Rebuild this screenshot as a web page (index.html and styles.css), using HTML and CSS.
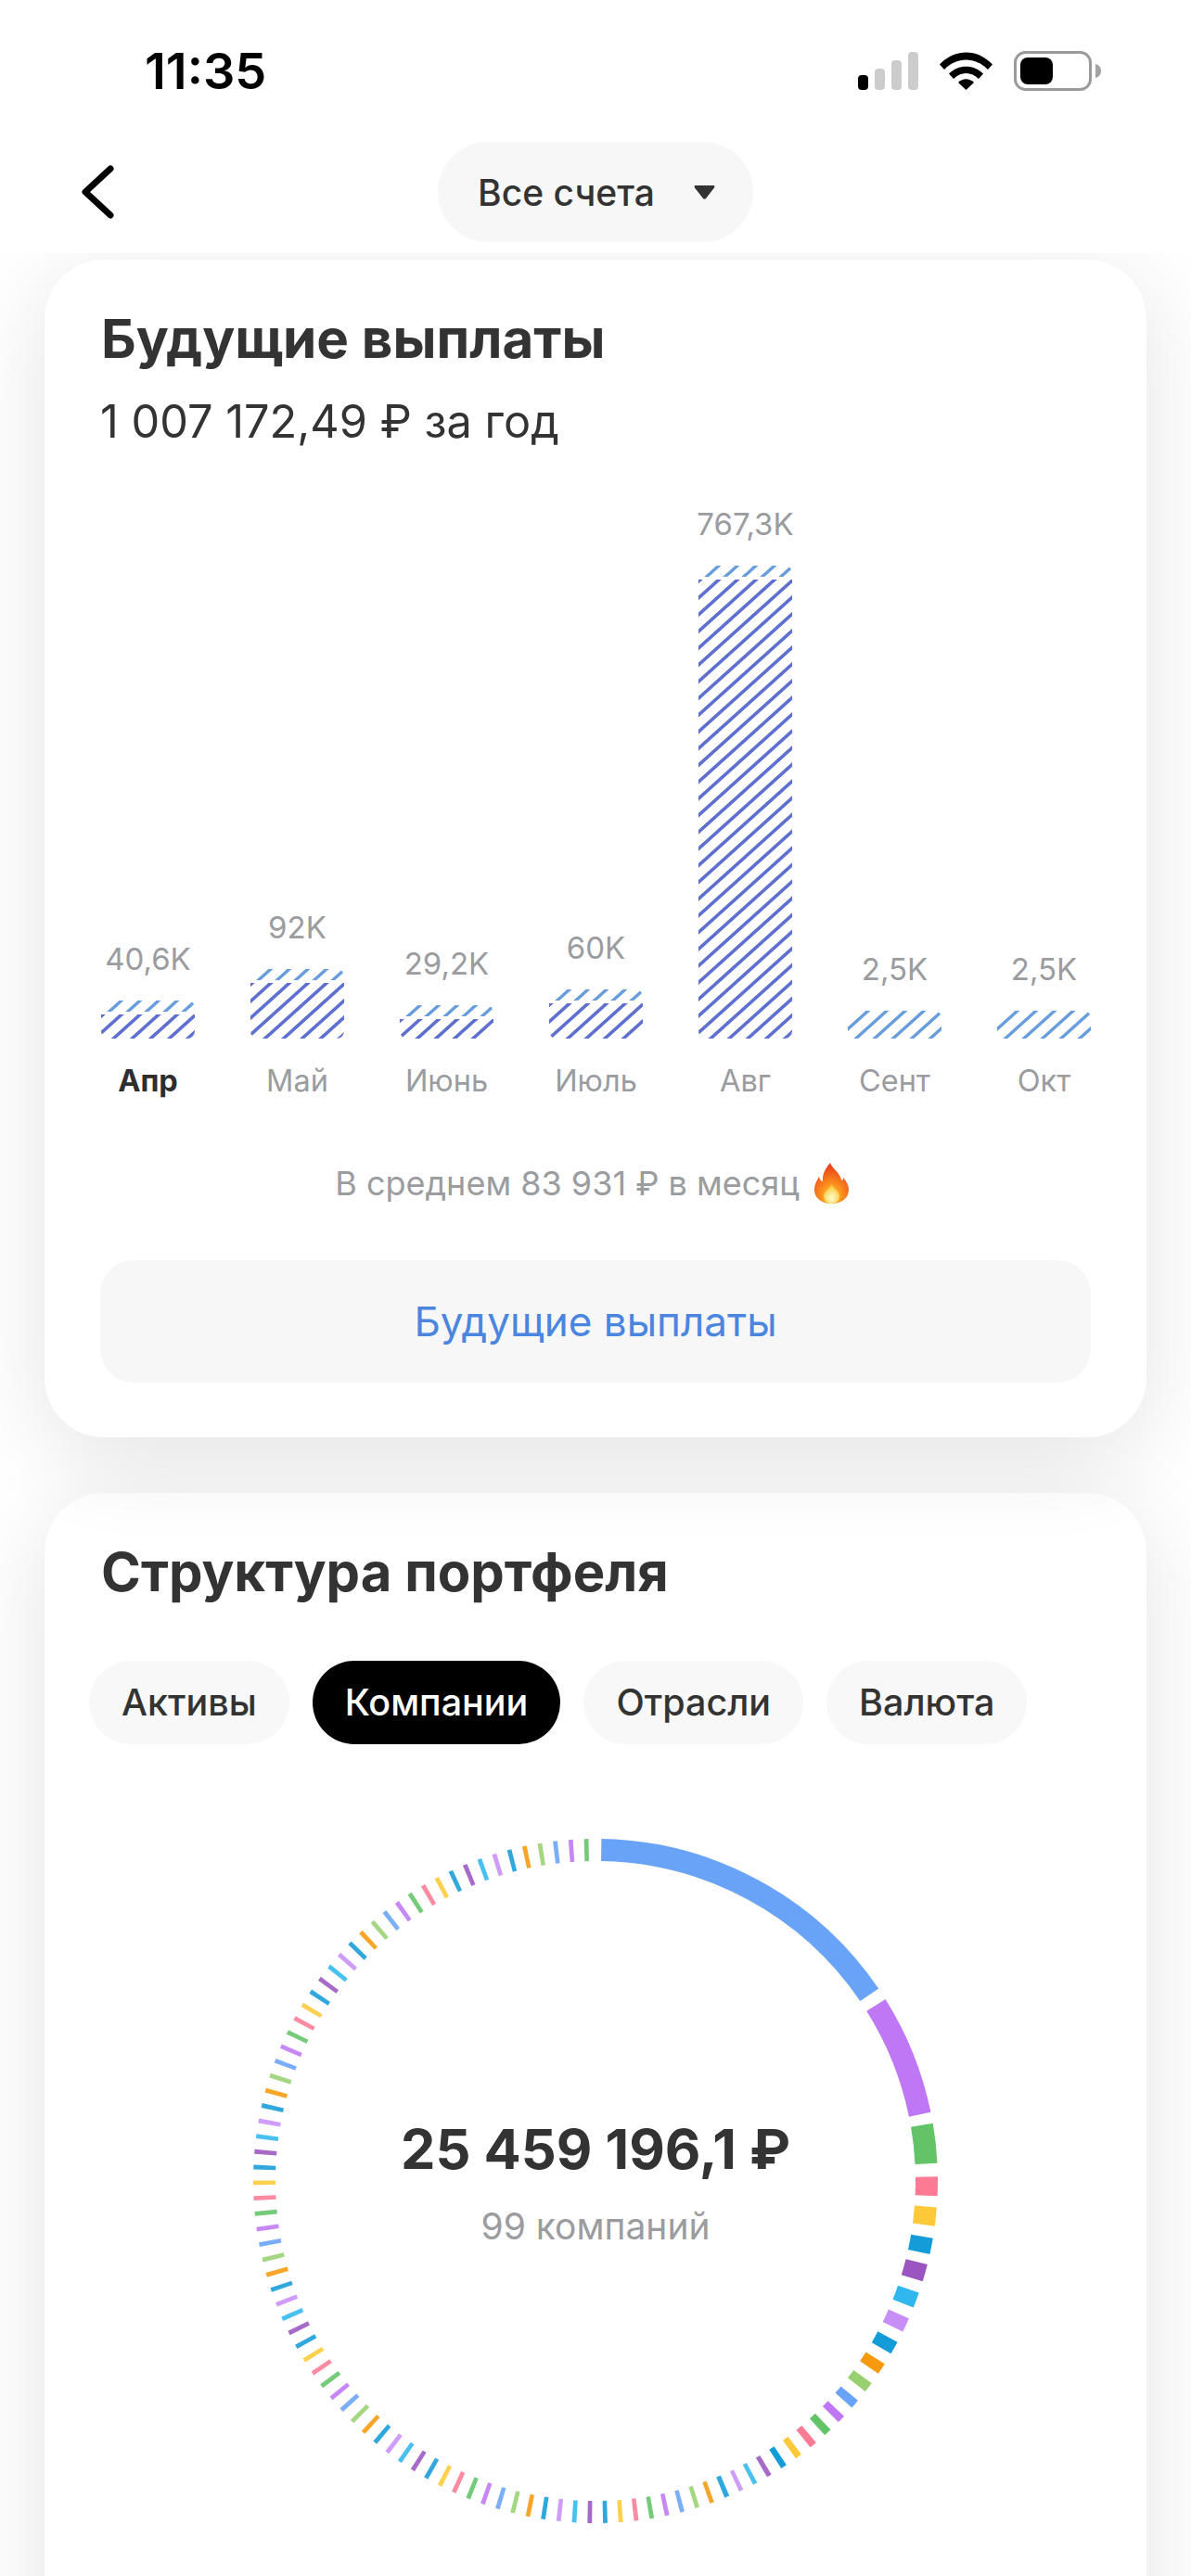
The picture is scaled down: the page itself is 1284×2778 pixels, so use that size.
FILE: index.html
```html
<!DOCTYPE html>
<html lang="ru">
<head>
    <meta charset="UTF-8">
    <meta name="viewport" content="width=device-width, initial-scale=1.0">
    <title>Портфель</title>
    <link rel="stylesheet" href="styles.css">
</head>
<body>
    <div class="header">
        <!-- Status bar -->
        <div class="status-bar">
            <span class="clock">11:35</span>
            <div class="status-icons">
                <svg class="icon-signal" viewBox="0 0 65 41" width="65" height="41">
                    <rect x="0" y="25" width="11" height="16" rx="4" fill="#000"/>
                    <rect x="18" y="18" width="11" height="23" rx="4" fill="#ccc"/>
                    <rect x="36" y="9" width="11" height="32" rx="4" fill="#ccc"/>
                    <rect x="54" y="0" width="11" height="41" rx="4" fill="#ccc"/>
                </svg>
                <svg class="icon-wifi" viewBox="0 0 57 41" width="57" height="41">
                    <path d="M0 13.5C16-4 41-4 57 13.5L52 19C38.500 5 18.500 5 5 19Z" fill="#000"/>
                    <path d="M10 23.500C20 13 37 13 47 23.500L42 29C34.500 21 22.500 21 15 29Z" fill="#000"/>
                    <path d="M20 33C25 28 32 28 37 33L28.500 41Z" fill="#000"/>
                </svg>
                <svg class="icon-battery" viewBox="0 0 94 43" width="94" height="43">
                    <rect x="1.500" y="1.500" width="81" height="40" rx="11" fill="none" stroke="#9a9a9a" stroke-width="3"/>
                    <rect x="7" y="7" width="35" height="29" rx="8" fill="#000"/>
                    <path d="M88 14C92 15 94 18 94 21.500C94 25 92 28 88 29Z" fill="#a3a3a3"/>
                </svg>
            </div>
        </div>

        <!-- Nav row -->
        <div class="nav-row">
            <svg class="icon-back" viewBox="0 0 35 58" width="35" height="58">
                <path d="M31 4L4 29L31 54" fill="none" stroke="#000" stroke-width="7" stroke-linecap="round" stroke-linejoin="round"/>
            </svg>
            <div class="account-pill">
                <span>Все счета</span>
                <svg viewBox="0 0 23 16" width="23" height="16">
                    <path d="M2 1H21C22 1 23 2 22 3.500L13 15C12 16 11 16 10 15L1 3.500C0 2 1 1 2 1Z" fill="#333"/>
                </svg>
            </div>
        </div>
    </div>

    <div class="content">
        <!-- Future payouts -->
        <div class="card card-payouts">
            <h2 class="card-title">Будущие выплаты</h2>
            <p class="card-subtitle">1 007 172,49 ₽ за год</p>

            <div class="chart">
                <div class="column">
                    <span class="value">40,6K</span>
                    <div class="bar bar-split" style="height: 41px"><i class="bar-top"></i><i class="bar-main"></i></div>
                    <span class="month month-current">Апр</span>
                </div>
                <div class="column">
                    <span class="value">92K</span>
                    <div class="bar bar-split" style="height: 75px"><i class="bar-top"></i><i class="bar-main"></i></div>
                    <span class="month">Май</span>
                </div>
                <div class="column">
                    <span class="value">29,2K</span>
                    <div class="bar bar-split" style="height: 36px"><i class="bar-top"></i><i class="bar-main"></i></div>
                    <span class="month">Июнь</span>
                </div>
                <div class="column">
                    <span class="value">60K</span>
                    <div class="bar bar-split" style="height: 53px"><i class="bar-top"></i><i class="bar-main"></i></div>
                    <span class="month">Июль</span>
                </div>
                <div class="column">
                    <span class="value">767,3K</span>
                    <div class="bar bar-split" style="height: 510px"><i class="bar-top"></i><i class="bar-main"></i></div>
                    <span class="month">Авг</span>
                </div>
                <div class="column">
                    <span class="value">2,5K</span>
                    <div class="bar" style="height: 30px"><i class="bar-top bar-full"></i></div>
                    <span class="month">Сент</span>
                </div>
                <div class="column">
                    <span class="value">2,5K</span>
                    <div class="bar" style="height: 30px"><i class="bar-top bar-full"></i></div>
                    <span class="month">Окт</span>
                </div>
            </div>

            <div class="average">
                <span>В среднем 83 931 ₽ в месяц</span>
                <svg viewBox="0 0 37 44" width="37" height="44">
                    <defs>
                        <radialGradient id="flame" cx="50%" cy="82%" r="75%">
                            <stop offset="0" stop-color="#ffd23a"/>
                            <stop offset="0.45" stop-color="#fb8a1c"/>
                            <stop offset="1" stop-color="#e8401c"/>
                        </radialGradient>
                        <radialGradient id="flame-core" cx="50%" cy="70%" r="60%">
                            <stop offset="0" stop-color="#fffbd0"/>
                            <stop offset="1" stop-color="#ffc93a"/>
                        </radialGradient>
                    </defs>
                    <path d="M17 0C19 6 27 10 29 18C30 20 31 19 31 16C35 20 37 25 37 29C37 38 29 44 18.500 44C8 44 0 38 0 29C0 23 3 19 5 15C6 18 7 20 9 20C8 13 12 6 17 0Z" fill="url(#flame)"/>
                    <path d="M18.500 23C20 28 27 30 27 36C27 41 23 44 18.500 44C14 44 10 41 10 36C10 30 17 28 18.500 23Z" fill="url(#flame-core)"/>
                </svg>
            </div>

            <div class="link-button">Будущие выплаты</div>
        </div>

        <!-- Portfolio structure -->
        <div class="card card-structure">
            <h2 class="card-title">Структура портфеля</h2>

            <div class="tabs">
                <div class="tab">Активы</div>
                <div class="tab tab-active">Компании</div>
                <div class="tab">Отрасли</div>
                <div class="tab">Валюта</div>
            </div>

            <div class="donut">
                <svg id="donut-chart" viewBox="0 0 738 738" width="738" height="738"></svg>
                <div class="donut-center">
                    <div class="donut-total">25 459 196,1 ₽</div>
                    <div class="donut-count">99 компаний</div>
                </div>
            </div>
        </div>
    </div>

    <script src="script.js"></script>
</body>
</html>
```

FILE: styles.css
```css
* {
    box-sizing: border-box;
}

body {
    width: 1284px;
    height: 2778px;
    margin: 0;
    overflow: hidden;
    background: #fff;
    font-family: 'Inter', 'Noto Sans', sans-serif;
    color: #333;
}

.header {
    position: relative;
    z-index: 2;
    height: 273px;
    background: #fff;
}

.status-bar {
    display: flex;
    justify-content: space-between;
    align-items: center;
    height: 153px;
    padding: 0 97px 0 156px;
}

.clock {
    font-size: 54px;
    font-weight: 600;
    color: #000;
}

.status-icons {
    display: flex;
    align-items: center;
    gap: 23px;
}

.nav-row {
    display: grid;
    grid-template-columns: 1fr auto 1fr;
    align-items: center;
}

.icon-back {
    margin-left: 88px;
}

.account-pill {
    display: flex;
    align-items: center;
    gap: 42px;
    height: 108px;
    padding: 0 41px 0 43px;
    background: #f7f7f7;
    border-radius: 54px;
    font-size: 39px;
    font-weight: 500;
    color: #333;
}

.content {
    padding: 7px 48px 0;
}

.card {
    position: relative;
    background: #fff;
    border-radius: 64px;
    box-shadow: 0 20px 100px rgba(0, 0, 0, 0.11);
}

.card-payouts {
    z-index: 1;
    height: 1270px;
    padding: 55px 60px 0;
    margin-bottom: 60px;
}

.card-structure {
    height: 1300px;
    padding: 55px 48px 0;
}

.card-title {
    margin: 0 0 0 1px;
    font-size: 58.300px;
    line-height: 60px;
    font-weight: 700;
    color: #333;
}

.card-structure .card-title {
    margin-left: 13px;
    font-size: 58px;
}

.card-subtitle {
    margin: 35px 0 0;
    font-size: 48.700px;
    line-height: 50px;
    color: #333;
}

.chart {
    display: flex;
    align-items: flex-end;
    gap: 60px;
    margin: 65px 0 0 1px;
}

.column {
    display: flex;
    flex-direction: column;
    align-items: center;
    width: 101px;
}

.value,
.month {
    font-size: 33px;
    line-height: 40px;
    color: #9a9c9f;
    white-space: nowrap;
}

.value {
    margin-bottom: 25px;
}

.month {
    margin-top: 26px;
    font-size: 32.500px;
}

.month-current {
    font-weight: 700;
    color: #2e2e2e;
}

.bar {
    display: flex;
    flex-direction: column;
    width: 101px;
    border-radius: 8px;
    overflow: hidden;
}

.bar i {
    display: block;
}

.bar-top {
    flex: 0 0 12px;
    background: repeating-linear-gradient(138deg, #689edd 0 2.600px, transparent 3.400px 12.600px, #689edd 13.400px);
}

.bar-full {
    flex: 1;
}

.bar-main {
    flex: 1;
    margin-top: 3px;
    background: repeating-linear-gradient(138deg, #6070d0 0 2.800px, transparent 3.600px 12.600px, #6070d0 13.400px);
}

.average {
    display: flex;
    justify-content: center;
    align-items: center;
    gap: 16px;
    height: 44px;
    margin-top: 68px;
    padding-right: 8px;
    font-size: 36px;
    color: #9a9c9f;
}

.link-button {
    display: flex;
    justify-content: center;
    align-items: center;
    height: 132px;
    margin-top: 61px;
    background: #f7f7f7;
    border-radius: 36px;
    font-size: 44px;
    color: #4a86e0;
}

.tabs {
    display: flex;
    gap: 25px;
    margin-top: 66px;
}

.tab {
    display: flex;
    align-items: center;
    height: 90px;
    padding: 0 35px;
    background: #f8f8f8;
    border-radius: 45px;
    font-size: 39.500px;
    font-weight: 500;
    color: #333;
}

.tab-active {
    background: #000;
    color: #fff;
}

.donut {
    display: grid;
    justify-content: center;
    align-items: center;
    margin-top: 102px;
}

.donut svg,
.donut-center {
    grid-area: 1 / 1;
}

.donut-center {
    padding-top: 3px;
    text-align: center;
}

.donut-total {
    font-size: 59.500px;
    line-height: 70px;
    font-weight: 700;
    color: #333;
}

.donut-count {
    margin-top: 24px;
    font-size: 39px;
    line-height: 50px;
    color: #9a9c9f;
}
```

FILE: script.js
```js
const COLORS = ['#69a3f8', '#bf77f5', '#62c466', '#fc7a94', '#fdc938', '#149cd8',
    '#9b55c0', '#2fb7ee', '#c88ef8', '#149cd8', '#f79a0d', '#98d070'];

// Start and end of the three big holdings, in degrees from the top
const BIG = [[1, 55.8], [57.9, 78.4], [80.3, 87]];

// Centres of the next ticks, they get closer until the step settles
const CENTERS = [90.9, 96, 101, 105.6, 110.4, 114.9, 119.2, 123.3, 127.1, 130.7, 134.1,
    137.3, 140.5, 143.6, 146.6, 149.5, 152.2, 154.8, 157.4, 160.1, 162.7];

const RADIUS = 357;
const CENTER = 369;

function point(deg) {
    const a = deg * Math.PI / 180;
    return (CENTER + RADIUS * Math.sin(a)).toFixed(2) + ' ' + (CENTER - RADIUS * Math.cos(a)).toFixed(2);
}

function addSegment(svg, from, to, color, opacity) {
    const path = document.createElementNS('http://www.w3.org/2000/svg', 'path');
    const large = to - from > 180 ? 1 : 0;
    path.setAttribute('d', `M${point(from)}A${RADIUS} ${RADIUS} 0 ${large} 1 ${point(to)}`);
    path.setAttribute('fill', 'none');
    path.setAttribute('stroke', color);
    path.setAttribute('stroke-width', '24');
    path.setAttribute('stroke-opacity', opacity);
    svg.appendChild(path);
}

function drawDonut() {
    const svg = document.getElementById('donut-chart');

    BIG.forEach((seg, i) => addSegment(svg, seg[0], seg[1], COLORS[i], 1));

    for (let i = 3; i < 99; i++) {
        const k = i - 3;
        const center = k < CENTERS.length ? CENTERS[k] : 162.7 + (k - CENTERS.length + 1) * 2.61;
        const next = k + 1 < CENTERS.length ? CENTERS[k + 1] : center + 2.61;
        const width = Math.max(0.7, next - center - 1.85);
        const opacity = width > 1 ? 1 : 0.88;
        addSegment(svg, center - width / 2, center + width / 2, COLORS[i % 12], opacity);
    }
}

drawDonut();
```
